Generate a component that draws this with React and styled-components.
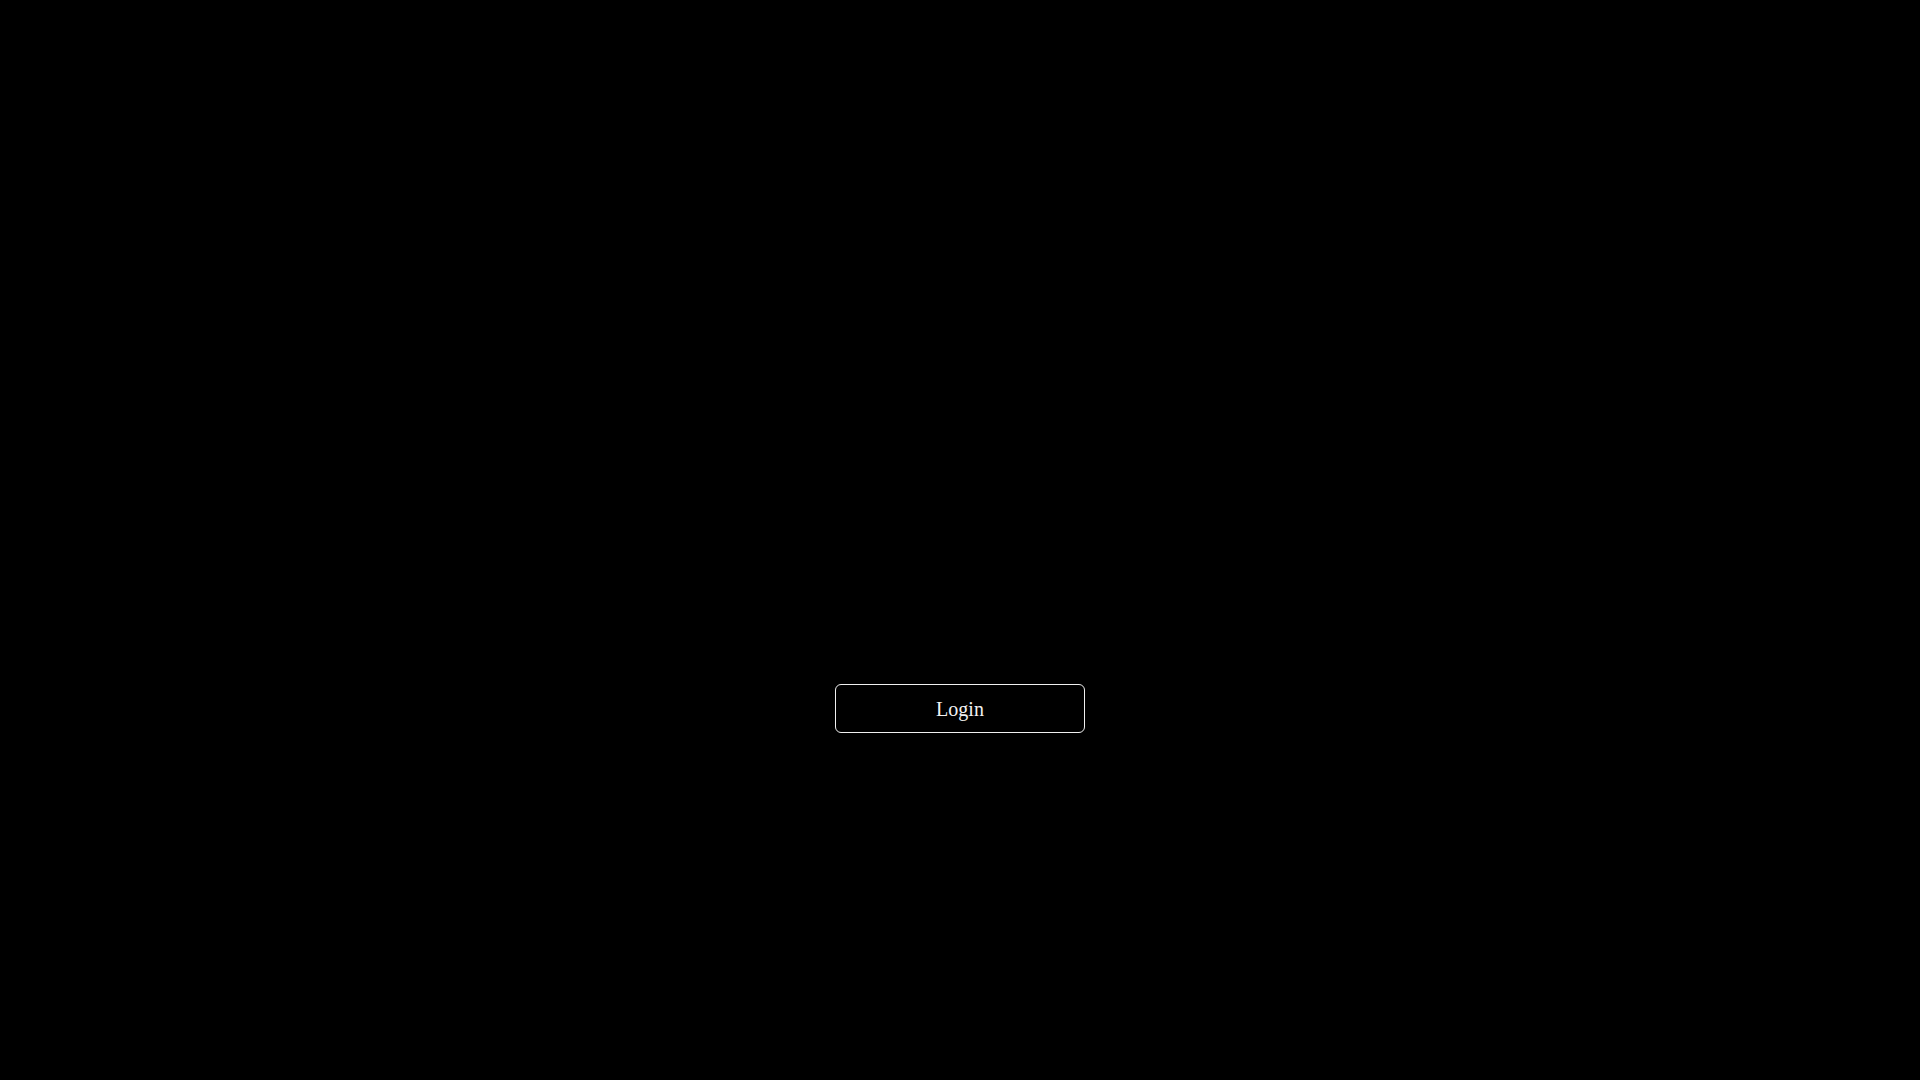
import React from "react";
import styled, { createGlobalStyle } from "styled-components";

const GlobalStyle = createGlobalStyle`
  html, body {
    margin: 0;
    padding: 0;
    background: #000;
    height: 100%;
  }
  #root {
    min-height: 100vh;
  }
`;

const Page = styled.main`
  min-height: 100vh;
  box-sizing: border-box;
  background: #000;
  display: flex;
  flex-direction: column;
  align-items: center;
  padding-top: 684px;
`;

const LoginButton = styled.button`
  box-sizing: border-box;
  width: 250px;
  height: 49px;
  background: #000;
  color: #f2f2f2;
  border: 1px solid #f0f0f0;
  border-radius: 6px;
  font-family: "Liberation Serif", "Times New Roman", serif;
  font-size: 20px;
  cursor: pointer;
  padding: 2px 0 0;
`;

export default function App() {
  return (
    <>
      <GlobalStyle />
      <Page>
        <LoginButton type="button">Login</LoginButton>
      </Page>
    </>
  );
}
